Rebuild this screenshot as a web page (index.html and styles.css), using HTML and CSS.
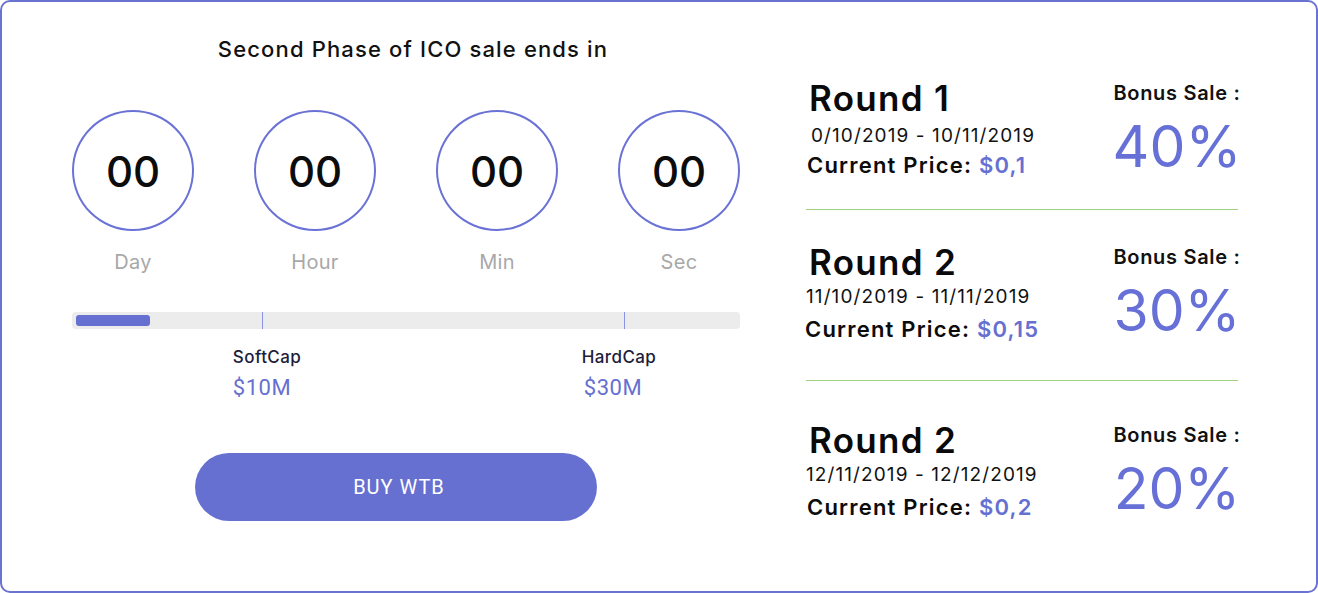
FILE: index.html
```html
<!DOCTYPE html>
<html>
<head>
<meta charset="utf-8">
<link rel="stylesheet" href="styles.css">
</head>
<body>
<div class="card">
  <section class="left">
    <h2 class="title">Second Phase of ICO sale ends in</h2>
    <div class="timers">
      <div class="timer"><div class="circle">00</div><div class="unit">Day</div></div>
      <div class="timer"><div class="circle">00</div><div class="unit">Hour</div></div>
      <div class="timer"><div class="circle">00</div><div class="unit">Min</div></div>
      <div class="timer"><div class="circle">00</div><div class="unit">Sec</div></div>
    </div>
    <div class="bar">
      <div class="fill" style="width:74px"></div>
      <span class="mark mark-soft"></span>
      <span class="mark mark-hard"></span>
    </div>
    <div class="caps">
      <div class="cap cap-soft"><div class="cap-name">SoftCap</div><div class="cap-val">$10M</div></div>
      <div class="cap cap-hard"><div class="cap-name">HardCap</div><div class="cap-val">$30M</div></div>
    </div>
    <div class="btn-wrap"><button class="buy">BUY WTB</button></div>
  </section>
  <section class="right">
    <div class="round first">
      <div class="info">
        <div class="rname">Round 1</div>
        <div class="date">0/10/2019 - 10/11/2019</div>
        <div class="price">Current Price: <span class="pv">$0,1</span></div>
      </div>
      <div class="bonus">
        <div class="blabel">Bonus Sale :</div>
        <div class="pct">40%</div>
      </div>
    </div>
    <div class="round">
      <div class="info">
        <div class="rname">Round 2</div>
        <div class="date shift">11/10/2019 - 11/11/2019</div>
        <div class="price shift">Current Price: <span class="pv">$0,15</span></div>
      </div>
      <div class="bonus">
        <div class="blabel">Bonus Sale :</div>
        <div class="pct">30%</div>
      </div>
    </div>
    <div class="round last">
      <div class="info">
        <div class="rname">Round 2</div>
        <div class="date shift">12/11/2019 - 12/12/2019</div>
        <div class="price">Current Price: <span class="pv">$0,2</span></div>
      </div>
      <div class="bonus">
        <div class="blabel">Bonus Sale :</div>
        <div class="pct">20%</div>
      </div>
    </div>
  </section>
</div>
</body>
</html>
```
FILE: styles.css
```css
* { box-sizing: border-box; }
html, body { margin: 0; padding: 0; background: #fff; }
body { font-family: Inter, "Noto Sans", sans-serif; color: #111; }

.card {
  width: 1318px;
  height: 593px;
  border: 2px solid #6a72d2;
  border-radius: 10px;
  display: flex;
  background: #fff;
}

.left {
  width: 804px;
  padding: 0 66px 0 70px;
  display: flex;
  flex-direction: column;
}
.title {
  margin: 34px 0 0 0;
  font-size: 22px;
  font-weight: 500;
  line-height: 26px;
  text-align: center;
  padding-left: 14px;
  color: #111;
  letter-spacing: 1.15px;
}
.timers {
  margin-top: 48px;
  display: flex;
  justify-content: space-between;
}
.timer { display: flex; flex-direction: column; align-items: center; }
.circle {
  width: 122px;
  height: 121px;
  border: 2px solid #6a72d6;
  border-radius: 50%;
  display: flex;
  align-items: center;
  justify-content: center;
  font-size: 42px;
  font-weight: 500;
  color: #0c0c0c;
  padding-top: 2px;
}
.unit {
  margin-top: 19px;
  font-size: 20px;
  line-height: 24px;
  color: #a8a8a8;
  letter-spacing: 0.3px;
}
.bar {
  position: relative;
  margin-top: 38px;
  height: 17px;
  background: #ececec;
  border-radius: 4px;
  padding: 3px 4px;
}
.fill { height: 11px; background: #6670d0; border-radius: 3px; }
.mark {
  position: absolute;
  top: 0;
  width: 1px;
  height: 17px;
  background: #8c93e0;
}
.mark-soft { left: 190px; }
.mark-hard { left: 552px; }

.caps { position: relative; height: 90px; }
.cap { position: absolute; top: 17px; text-align: center; }
.cap-soft { left: 150px; width: 90px; }
.cap-hard { left: 502px; width: 90px; }
.cap-name { font-size: 17px; line-height: 22px; color: #1d1d3b; font-weight: 500; letter-spacing: 0.4px; }
.cap-val {
  margin-top: 8px;
  font-family: Roboto, sans-serif;
  font-size: 22px;
  line-height: 24px;
  color: #6670d0;
  letter-spacing: 0.5px;
}
.cap-soft .cap-val { margin-left: -10px; }
.cap-hard .cap-val { margin-left: -12px; }

.btn-wrap { display: flex; padding-left: 123px; margin-top: 34px; }
.buy {
  width: 402px;
  height: 68px;
  border: none;
  border-radius: 34px;
  background: #6670d0;
  color: #fff;
  font-family: Roboto, sans-serif;
  font-size: 20px;
  letter-spacing: 1px;
  padding-left: 12px;
}

.right {
  width: 432px;
  padding-top: 76px;
}
.round {
  display: flex;
  justify-content: space-between;
  border-bottom: 1px solid #9fd17e;
  padding: 0 0 27px 0;
}
.round + .round { padding-top: 32px; padding-bottom: 34px; }
.round.last { border-bottom: none; padding-top: 39px; }
.info { padding-left: 3px; }
.rname { font-size: 35px; font-weight: 600; line-height: 40px; color: #0a0a0a; letter-spacing: 1.3px; }
.date { font-size: 19px; line-height: 30px; padding-left: 2px; color: #111; letter-spacing: 1.1px; }
.date.shift { padding-left: 0; margin-left: -3px; }
.round.first .date { margin-top: 3px; }
.round.first .price { margin-top: -3px; }
.price { font-size: 22px; font-weight: 600; line-height: 34px; color: #0c0c0c; letter-spacing: 1.2px; margin-left: -2px; }
.price.shift { margin-left: -4px; }
.pv { color: #6670d0; }
.bonus { width: 134px; text-align: center; padding-top: 2px; margin-right: -6px; }
.blabel { font-size: 20px; font-weight: 600; line-height: 26px; letter-spacing: 0.7px; }
.pct {
  margin-top: 11px;
  font-size: 57px;
  line-height: 60px;
  color: #6670d6;
  font-weight: 400;
}
```
